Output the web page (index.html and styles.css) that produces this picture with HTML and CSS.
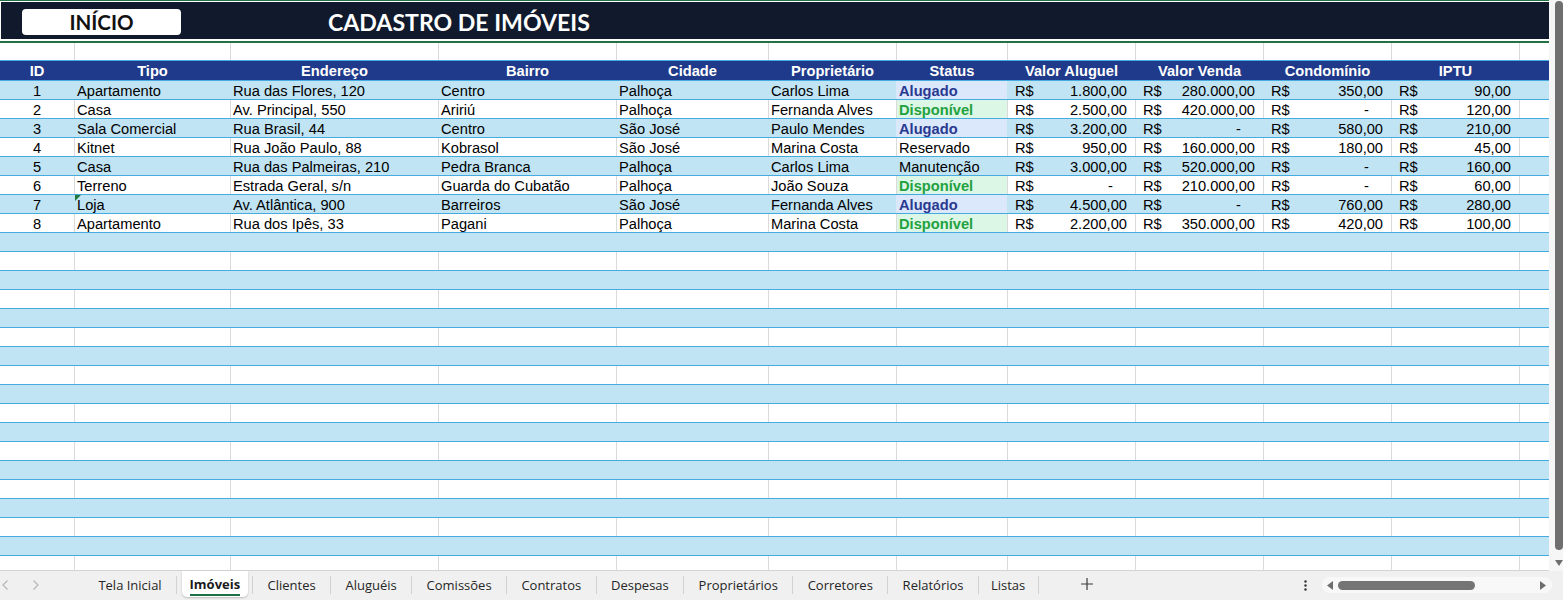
FILE: index.html
```html
<!DOCTYPE html>
<html lang="pt-BR">
<head>
<meta charset="utf-8">
<title>Cadastro de Imóveis</title>
<link rel="stylesheet" href="styles.css">
</head>
<body>
<div class="app">
  <div class="main">
    <div class="sheet">
      <div class="banner">
        <div class="panel">
          <div class="btn-inicio">INÍCIO</div>
          <div class="title">CADASTRO DE IMÓVEIS</div>
        </div>
      </div>
      <div class="row spacer white"><div class="c"></div><div class="c"></div><div class="c"></div><div class="c"></div><div class="c"></div><div class="c"></div><div class="c"></div><div class="c"></div><div class="c"></div><div class="c"></div><div class="c"></div><div class="c"></div></div>
      <div class="row head">
        <div class="c">ID</div><div class="c">Tipo</div><div class="c">Endereço</div><div class="c">Bairro</div><div class="c">Cidade</div><div class="c">Proprietário</div><div class="c">Status</div><div class="c">Valor Aluguel</div><div class="c">Valor Venda</div><div class="c">Condomínio</div><div class="c">IPTU</div><div class="c"></div>
      </div>

      <div class="row blue">
        <div class="c id">1</div><div class="c">Apartamento</div><div class="c">Rua das Flores, 120</div><div class="c">Centro</div><div class="c">Palhoça</div><div class="c">Carlos Lima</div><div class="c st alugado">Alugado</div>
        <div class="c m"><span>R$</span><span>1.800,00</span></div><div class="c m"><span>R$</span><span>280.000,00</span></div><div class="c m"><span>R$</span><span>350,00</span></div><div class="c m"><span>R$</span><span>90,00</span></div><div class="c"></div>
      </div>
      <div class="row white">
        <div class="c id">2</div><div class="c">Casa</div><div class="c">Av. Principal, 550</div><div class="c">Aririú</div><div class="c">Palhoça</div><div class="c">Fernanda Alves</div><div class="c st disp">Disponível</div>
        <div class="c m"><span>R$</span><span>2.500,00</span></div><div class="c m"><span>R$</span><span>420.000,00</span></div><div class="c m"><span>R$</span><span class="dash">-</span></div><div class="c m"><span>R$</span><span>120,00</span></div><div class="c"></div>
      </div>
      <div class="row blue">
        <div class="c id">3</div><div class="c">Sala Comercial</div><div class="c">Rua Brasil, 44</div><div class="c">Centro</div><div class="c">São José</div><div class="c">Paulo Mendes</div><div class="c st alugado">Alugado</div>
        <div class="c m"><span>R$</span><span>3.200,00</span></div><div class="c m"><span>R$</span><span class="dash">-</span></div><div class="c m"><span>R$</span><span>580,00</span></div><div class="c m"><span>R$</span><span>210,00</span></div><div class="c"></div>
      </div>
      <div class="row white">
        <div class="c id">4</div><div class="c">Kitnet</div><div class="c">Rua João Paulo, 88</div><div class="c">Kobrasol</div><div class="c">São José</div><div class="c">Marina Costa</div><div class="c st">Reservado</div>
        <div class="c m"><span>R$</span><span>950,00</span></div><div class="c m"><span>R$</span><span>160.000,00</span></div><div class="c m"><span>R$</span><span>180,00</span></div><div class="c m"><span>R$</span><span>45,00</span></div><div class="c"></div>
      </div>
      <div class="row blue">
        <div class="c id">5</div><div class="c">Casa</div><div class="c">Rua das Palmeiras, 210</div><div class="c">Pedra Branca</div><div class="c">Palhoça</div><div class="c">Carlos Lima</div><div class="c st">Manutenção</div>
        <div class="c m"><span>R$</span><span>3.000,00</span></div><div class="c m"><span>R$</span><span>520.000,00</span></div><div class="c m"><span>R$</span><span class="dash">-</span></div><div class="c m"><span>R$</span><span>160,00</span></div><div class="c"></div>
      </div>
      <div class="row white">
        <div class="c id">6</div><div class="c">Terreno</div><div class="c">Estrada Geral, s/n</div><div class="c">Guarda do Cubatão</div><div class="c">Palhoça</div><div class="c">João Souza</div><div class="c st disp">Disponível</div>
        <div class="c m"><span>R$</span><span class="dash">-</span></div><div class="c m"><span>R$</span><span>210.000,00</span></div><div class="c m"><span>R$</span><span class="dash">-</span></div><div class="c m"><span>R$</span><span>60,00</span></div><div class="c"></div>
      </div>
      <div class="row blue">
        <div class="c id">7</div><div class="c flag">Loja</div><div class="c">Av. Atlântica, 900</div><div class="c">Barreiros</div><div class="c">São José</div><div class="c">Fernanda Alves</div><div class="c st alugado">Alugado</div>
        <div class="c m"><span>R$</span><span>4.500,00</span></div><div class="c m"><span>R$</span><span class="dash">-</span></div><div class="c m"><span>R$</span><span>760,00</span></div><div class="c m"><span>R$</span><span>280,00</span></div><div class="c"></div>
      </div>
      <div class="row white">
        <div class="c id">8</div><div class="c">Apartamento</div><div class="c">Rua dos Ipês, 33</div><div class="c">Pagani</div><div class="c">Palhoça</div><div class="c">Marina Costa</div><div class="c st disp">Disponível</div>
        <div class="c m"><span>R$</span><span>2.200,00</span></div><div class="c m"><span>R$</span><span>350.000,00</span></div><div class="c m"><span>R$</span><span>420,00</span></div><div class="c m"><span>R$</span><span>100,00</span></div><div class="c"></div>
      </div>

      <!-- row 9 -->
      <div class="row blue"></div>
      <!-- row 10 -->
      <div class="row white"><div class="c"></div><div class="c"></div><div class="c"></div><div class="c"></div><div class="c"></div><div class="c"></div><div class="c"></div><div class="c"></div><div class="c"></div><div class="c"></div><div class="c"></div><div class="c"></div></div>
      <!-- row 11 -->
      <div class="row blue"></div>
      <!-- row 12 -->
      <div class="row white"><div class="c"></div><div class="c"></div><div class="c"></div><div class="c"></div><div class="c"></div><div class="c"></div><div class="c"></div><div class="c"></div><div class="c"></div><div class="c"></div><div class="c"></div><div class="c"></div></div>
      <!-- row 13 -->
      <div class="row blue"></div>
      <!-- row 14 -->
      <div class="row white"><div class="c"></div><div class="c"></div><div class="c"></div><div class="c"></div><div class="c"></div><div class="c"></div><div class="c"></div><div class="c"></div><div class="c"></div><div class="c"></div><div class="c"></div><div class="c"></div></div>
      <!-- row 15 -->
      <div class="row blue"></div>
      <!-- row 16 -->
      <div class="row white"><div class="c"></div><div class="c"></div><div class="c"></div><div class="c"></div><div class="c"></div><div class="c"></div><div class="c"></div><div class="c"></div><div class="c"></div><div class="c"></div><div class="c"></div><div class="c"></div></div>
      <!-- row 17 -->
      <div class="row blue"></div>
      <!-- row 18 -->
      <div class="row white"><div class="c"></div><div class="c"></div><div class="c"></div><div class="c"></div><div class="c"></div><div class="c"></div><div class="c"></div><div class="c"></div><div class="c"></div><div class="c"></div><div class="c"></div><div class="c"></div></div>
      <!-- row 19 -->
      <div class="row blue"></div>
      <!-- row 20 -->
      <div class="row white"><div class="c"></div><div class="c"></div><div class="c"></div><div class="c"></div><div class="c"></div><div class="c"></div><div class="c"></div><div class="c"></div><div class="c"></div><div class="c"></div><div class="c"></div><div class="c"></div></div>
      <!-- row 21 -->
      <div class="row blue"></div>
      <!-- row 22 -->
      <div class="row white"><div class="c"></div><div class="c"></div><div class="c"></div><div class="c"></div><div class="c"></div><div class="c"></div><div class="c"></div><div class="c"></div><div class="c"></div><div class="c"></div><div class="c"></div><div class="c"></div></div>
      <!-- row 23 -->
      <div class="row blue"></div>
      <!-- row 24 -->
      <div class="row white"><div class="c"></div><div class="c"></div><div class="c"></div><div class="c"></div><div class="c"></div><div class="c"></div><div class="c"></div><div class="c"></div><div class="c"></div><div class="c"></div><div class="c"></div><div class="c"></div></div>
      <!-- row 25 -->
      <div class="row blue"></div>
      <!-- row 26 (partial) -->
      <div class="row white last"><div class="c"></div><div class="c"></div><div class="c"></div><div class="c"></div><div class="c"></div><div class="c"></div><div class="c"></div><div class="c"></div><div class="c"></div><div class="c"></div><div class="c"></div><div class="c"></div></div>
    </div>
    <div class="vscroll">
      <div class="vthumb"></div>
      <svg class="vdown" width="8" height="6" viewBox="0 0 8 6"><path d="M0 0H8L4 6Z" fill="#6e6e6e"/></svg>
    </div>
  </div>

  <div class="tabbar">
    <div class="nav">
      <svg width="6" height="10" viewBox="0 0 6 10"><path d="M5.5 0.5L1 5l4.5 4.5" fill="none" stroke="#b4b4b4" stroke-width="1.1"/></svg>
      <svg width="6" height="10" viewBox="0 0 6 10"><path d="M0.5 0.5L5 5 0.5 9.5" fill="none" stroke="#b4b4b4" stroke-width="1.1"/></svg>
    </div>
    <div class="tab">Tela Inicial</div><span class="sep"></span>
    <div class="tab active"><span class="lbl">Imóveis</span></div><span class="sep"></span>
    <div class="tab">Clientes</div><span class="sep"></span>
    <div class="tab">Aluguéis</div><span class="sep"></span>
    <div class="tab">Comissões</div><span class="sep"></span>
    <div class="tab">Contratos</div><span class="sep"></span>
    <div class="tab">Despesas</div><span class="sep"></span>
    <div class="tab">Proprietários</div><span class="sep"></span>
    <div class="tab">Corretores</div><span class="sep"></span>
    <div class="tab">Relatórios</div><span class="sep"></span>
    <div class="tab final">Listas</div><span class="sep"></span>
    <div class="add">
      <svg width="12" height="12" viewBox="0 0 12 12"><path d="M6 0V12M0 6H12" stroke="#3a3a3a" stroke-width="1.2"/></svg>
    </div>
    <div class="right">
      <div class="more">
        <svg width="3" height="11" viewBox="0 0 3 11"><circle cx="1.5" cy="1.5" r="1.2" fill="#333"/><circle cx="1.5" cy="5.5" r="1.2" fill="#333"/><circle cx="1.5" cy="9.5" r="1.2" fill="#333"/></svg>
      </div>
      <div class="hscroll">
        <svg width="6" height="9" viewBox="0 0 6 9"><path d="M6 0V9L0 4.5Z" fill="#6e6e6e"/></svg>
        <div class="hthumb"></div>
        <svg class="hright" width="6" height="9" viewBox="0 0 6 9"><path d="M0 0V9L6 4.5Z" fill="#6e6e6e"/></svg>
      </div>
    </div>
  </div>
</div>
</body>
</html>
```

FILE: styles.css
```css
html, body {
  margin: 0;
  padding: 0;
  width: 1563px;
  height: 600px;
  overflow: hidden;
  background: #ffffff;
}

.app {
  display: flex;
  flex-direction: column;
  width: 1563px;
  height: 600px;
}

.main {
  display: flex;
  height: 571px;
  flex: none;
}

.sheet {
  width: 1549px;
  height: 571px;
  box-sizing: border-box;
  border-bottom: 1px solid #d4d4d4;
  overflow: hidden;
  font-family: "Liberation Sans", Arial, sans-serif;
  font-size: 14.67px;
  color: #000;
}

/* ---------- banner ---------- */
.banner {
  height: 43px;
  box-sizing: border-box;
  border-top: 1px solid #217346;
  border-bottom: 2px solid #217346;
  padding: 1px 0 2px 1px;
  background: #ffffff;
}

.panel {
  height: 37px;
  background: #101a2c;
  display: flex;
  align-items: center;
  font-family: Lato, "Liberation Sans", sans-serif;
  font-weight: 700;
}

.btn-inicio {
  align-self: flex-start;
  margin: 7px 0 0 21px;
  width: 159px;
  height: 26px;
  background: #ffffff;
  border-radius: 4px;
  color: #111;
  font-size: 20.5px;
  line-height: 26px;
  text-align: center;
}

.title {
  margin-left: 147px;
  color: #ffffff;
  font-size: 23.1px;
  line-height: 28px;
  padding-top: 3px;
}

/* ---------- grid rows ---------- */
.row {
  display: grid;
  grid-template-columns: 74px 156px 208px 178px 152px 128px 111px 128px 128px 128px 128px 30px;
  height: 19px;
  flex: none;
  box-sizing: border-box;
  border-bottom: 1px solid #46abdf;
}

.row.blue { background: #c0e4f4; }
.row.white { background: #ffffff; }

.c {
  height: 18px;
  line-height: 20px;
  padding-left: 2px;
  white-space: nowrap;
  overflow: hidden;
}

.c + .c { border-left: 1px solid transparent; }
.row.white .c + .c { border-left-color: #dadada; }

.row.spacer { height: 18px; }
.row.spacer .c { height: 17px; }

.row.head {
  height: 20px;
  background: #1f3a8a;
  color: #ffffff;
  font-weight: 700;
}
.row.head .c {
  height: 19px;
  line-height: 20px;
  padding-left: 0;
  text-align: center;
}

.row.last {
  height: 14px;
  border-bottom: none;
}
.row.last .c { height: 14px; }

.c.id {
  text-align: center;
  padding-left: 0;
}

.c.st { padding-left: 2px; }
.c.st.alugado {
  background: #dbe7fb;
  color: #2a3990;
  font-weight: 700;
}
.c.st.disp {
  background: #dcf7e5;
  color: #23a140;
  font-weight: 700;
}

.c.m {
  display: flex;
  justify-content: space-between;
  padding-left: 7px;
  padding-right: 8px;
}
.c.m .dash { margin-right: 14px; }

.c.flag { position: relative; }
.c.flag::before {
  content: "";
  position: absolute;
  left: 0;
  top: 0;
  border-top: 6px solid #1e7a36;
  border-right: 6px solid transparent;
}

/* ---------- vertical scrollbar ---------- */
.vscroll {
  width: 14px;
  height: 571px;
  background: #f6f6f6;
  display: flex;
  flex-direction: column;
}
.vthumb {
  margin: 1px 0 0 6px;
  width: 8px;
  height: 549px;
  background: #6f6f6f;
  border-radius: 4px;
}
.vdown {
  margin: 10px 0 0 6px;
}

/* ---------- sheet tabs ---------- */
.tabbar {
  height: 29px;
  flex: none;
  background: #f0f0f0;
  display: flex;
  align-items: center;
  font-family: "Open Sans", "Noto Sans", sans-serif;
  font-size: 13px;
  color: #262626;
}

.nav {
  width: 84px;
  height: 29px;
  display: flex;
  align-items: center;
  gap: 25px;
  padding-left: 2px;
  box-sizing: border-box;
  margin-top: -2px;
}

.tab {
  padding: 0 14.4px;
  line-height: 18px;
  margin-top: -1px;
  white-space: nowrap;
}
.tab.final { padding: 0 13px 0 12px; }

.tab.active {
  align-self: flex-start;
  margin: 0 4px 0 4.5px;
  padding: 0 8px;
  height: 26px;
  background: #ffffff;
  border-radius: 0 0 5px 5px;
  box-shadow: 0 1px 2px rgba(0, 0, 0, 0.22);
  font-weight: 700;
  color: #1a1a1a;
  box-sizing: border-box;
  padding-top: 4px;
}
.tab.active .lbl {
  display: inline-block;
  line-height: 17px;
  border-bottom: 2px solid #1d7044;
  padding-bottom: 1px;
}

.sep {
  width: 1px;
  height: 18px;
  background: #d2d2d2;
  margin-top: -1px;
}

.add {
  margin-left: 42px;
  display: flex;
  margin-top: -3px;
}

.right {
  margin-left: auto;
  margin-right: 11px;
  display: flex;
  align-items: center;
}

.more {
  display: flex;
  margin-top: -1px;
}

.hscroll {
  margin-left: 15px;
  width: 230px;
  height: 16px;
  background: #f8f8f8;
  border-radius: 8px;
  display: flex;
  align-items: center;
  padding-left: 5px;
  box-sizing: border-box;
  margin-top: -1px;
}
.hthumb {
  margin-left: 5px;
  width: 137px;
  height: 9px;
  border-radius: 5px;
  background: #757575;
}
.hright {
  margin-left: 65px;
}
```
